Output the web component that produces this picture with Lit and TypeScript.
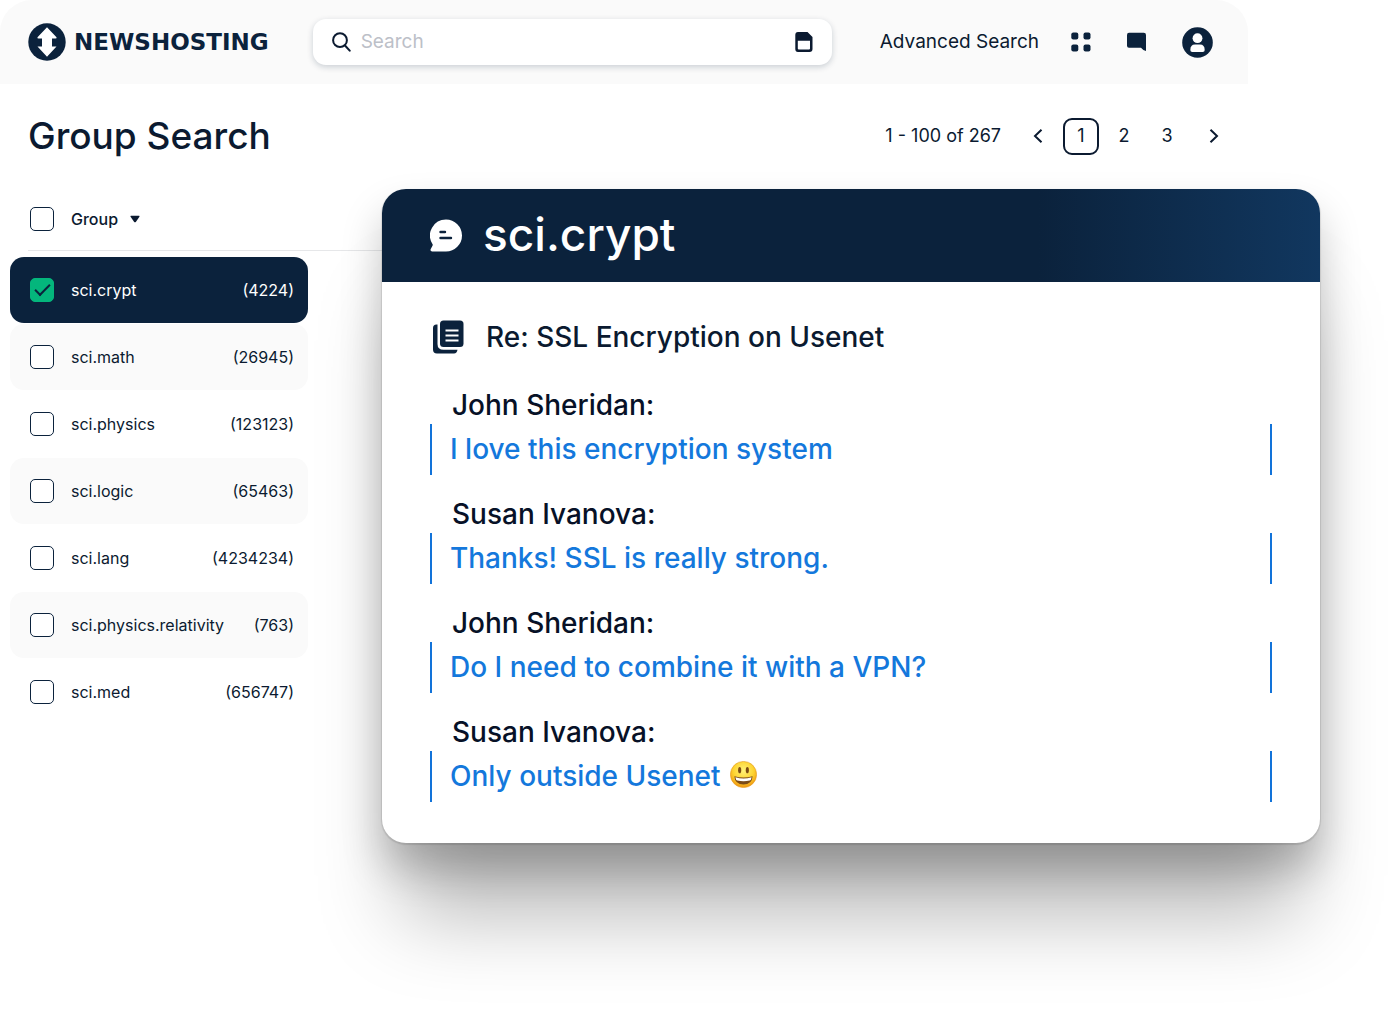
import { LitElement, html, css, svg } from "lit";
import { customElement, property, state } from "lit/decorators.js";
import { classMap } from "lit/directives/class-map.js";

interface Group {
  name: string;
  count: number;
}

interface Message {
  author: string;
  text: string;
  smile?: boolean;
}

const GROUPS: Group[] = [
  { name: "sci.crypt", count: 4224 },
  { name: "sci.math", count: 26945 },
  { name: "sci.physics", count: 123123 },
  { name: "sci.logic", count: 65463 },
  { name: "sci.lang", count: 4234234 },
  { name: "sci.physics.relativity", count: 763 },
  { name: "sci.med", count: 656747 },
];

const MESSAGES: Message[] = [
  { author: "John Sheridan", text: "I love this encryption system" },
  { author: "Susan Ivanova", text: "Thanks! SSL is really strong." },
  { author: "John Sheridan", text: "Do I need to combine it with a VPN?" },
  { author: "Susan Ivanova", text: "Only outside Usenet", smile: true },
];

const smile = svg`
  <defs>
    <radialGradient id="face" cx="50%" cy="35%" r="65%">
      <stop offset="0" stop-color="#fff27a" />
      <stop offset="0.6" stop-color="#fdd32f" />
      <stop offset="1" stop-color="#f0960f" />
    </radialGradient>
  </defs>
  <circle cx="13" cy="13" r="12.6" fill="url(#face)" stroke="#e39a1c" stroke-width="0.6" />
  <ellipse cx="9.3" cy="8.8" rx="1.5" ry="3" fill="#7b4a12" />
  <ellipse cx="16.7" cy="8.8" rx="1.5" ry="3" fill="#7b4a12" />
  <path d="M4.2 14.6Q13 17.4 21.8 14.6Q21.2 22.6 13 22.6Q4.8 22.6 4.2 14.6Z" fill="#7a4a16" />
  <path d="M5.2 15.6Q13 18 20.8 15.6Q20.4 18.4 19 18.8Q13 20 7 18.8Q5.6 18.4 5.2 15.6Z" fill="#fff" />`;

@customElement("group-list")
export class GroupList extends LitElement {
  @property({ attribute: false }) groups: Group[] = [];
  @state() private selected = new Set(["sci.crypt"]);

  static styles = css`
    :host {
      display: block;
      font-size: 16px;
    }
    .head {
      display: flex;
      align-items: center;
      gap: 17px;
      height: 62px;
      margin-left: 28px;
      padding-left: 2px;
      border-bottom: 1px solid #e6e7e9;
    }
    .sort {
      display: flex;
      align-items: center;
      gap: 12px;
      padding: 0;
      border: 0;
      background: none;
      color: inherit;
      font: inherit;
      font-weight: 500;
      cursor: pointer;
    }
    .rows {
      display: flex;
      flex-direction: column;
      gap: 1px;
      margin: 6px 74px 0 10px;
      padding: 0;
      list-style: none;
    }
    .row {
      display: flex;
      align-items: center;
      gap: 17px;
      height: 66px;
      padding: 0 14px 0 20px;
      border-radius: 14px;
      cursor: pointer;
    }
    .shaded {
      background: #fafafa;
    }
    .picked {
      background: #0b223c;
      color: #fff;
    }
    .name {
      flex: 1;
    }
    .box {
      appearance: none;
      flex: none;
      display: grid;
      place-content: center;
      width: 24px;
      height: 24px;
      margin: 0;
      border: 1px solid #0b223c;
      border-radius: 5px;
      background: #fff;
      cursor: pointer;
    }
    .box:checked {
      border-color: #04b67c;
      background: #04b67c;
    }
    .box:checked::before {
      content: "";
      width: 13px;
      height: 6px;
      margin-bottom: 4px;
      border: solid #0b223c;
      border-width: 0 0 2px 2px;
      transform: rotate(-45deg);
    }
  `;

  private toggle(name: string) {
    const next = new Set(this.selected);
    if (!next.delete(name)) next.add(name);
    this.selected = next;
  }

  render() {
    return html`
      <div class="head">
        <input class="box" type="checkbox" aria-label="Select all groups" />
        <button class="sort" type="button">
          Group
          <svg width="10" height="8" viewBox="0 0 10 8" aria-hidden="true">
            <path d="M1 .8h8q.9.1.4.9L5.800 6.900q-.8.8-1.600 0L.6 1.700Q.1.9 1 .8Z" fill="#0b1a30" />
          </svg>
        </button>
      </div>
      <ul class="rows">
        ${this.groups.map((g, i) => {
          const picked = this.selected.has(g.name);
          return html`<li>
            <label class=${classMap({ row: true, picked, shaded: !picked && i % 2 === 1 })}>
              <input class="box" type="checkbox" .checked=${picked} @change=${() => this.toggle(g.name)} />
              <span class="name">${g.name}</span>
              <span>(${g.count})</span>
            </label>
          </li>`;
        })}
      </ul>
    `;
  }
}

@customElement("thread-card")
export class ThreadCard extends LitElement {
  @property() group = "";
  @property() subject = "";
  @property({ attribute: false }) messages: Message[] = [];

  static styles = css`
    :host {
      display: block;
      border-radius: 24px;
      background: #fff;
      box-shadow:
        0 1px 1px 1px rgba(0, 0, 0, 0.1),
        0 24px 40px rgba(0, 0, 0, 0.22),
        0 92px 84px -20px rgba(0, 0, 0, 0.28);
    }
    .bar {
      display: flex;
      align-items: center;
      gap: 21px;
      height: 93px;
      padding: 0 48px;
      border-radius: 24px 24px 0 0;
      background: linear-gradient(90deg, #0b223c 70%, #11375f);
      color: #fff;
    }
    .group {
      margin: 0;
      font-size: 46px;
      font-weight: 500;
      line-height: 90px;
      height: 93px;
    }
    .body {
      padding: 38px 48px 41px;
      font-size: 28px;
      font-weight: 450;
      color: #071127;
    }
    .subject {
      display: flex;
      align-items: center;
      gap: 22px;
      margin: 0 0 32px 3px;
      font: inherit;
      line-height: 34px;
      color: #0b1a30;
    }
    .thread {
      display: flex;
      flex-direction: column;
      gap: 20px;
    }
    .author {
      margin: 0;
      padding-left: 22px;
      line-height: 38px;
    }
    .quote {
      display: flex;
      align-items: center;
      gap: 9px;
      margin: 0;
      padding: 0 18px;
      border: solid #1273d9;
      border-width: 0 2px;
      line-height: 51px;
      color: #1478dc;
    }
    .smile {
      margin-bottom: 4px;
    }
  `;

  render() {
    return html`
      <header class="bar">
        <svg width="32" height="33" viewBox="0 0 32 33" aria-hidden="true">
          <path d="M16 .5A16 16 0 0 1 16 32.500H2.200Q-.4 32 .9 29.800L2.600 26.600Q3 25.700 2.300 24.800A16 16 0 0 1 16 .5Z" fill="#fff" />
          <path d="M10.500 13h4.500M10.500 19h10.500" stroke="#0b223c" stroke-width="2.400" stroke-linecap="round" />
        </svg>
        <h2 class="group">${this.group}</h2>
      </header>
      <div class="body">
        <h3 class="subject">
          <svg width="31" height="34" viewBox="0 0 31 34" aria-hidden="true">
            <path d="M4.500 4.500H3.500Q0 4.500 0 8V29.500Q0 33.500 4 33.500H21Q24 33.500 24.500 29.800H10.500Q4.500 29.800 4.500 24Z" fill="#0b223c" />
            <rect x="7" y=".5" width="23.500" height="26.500" rx="3.500" fill="#0b223c" />
            <path d="M12.500 10.500h13M12.500 15.500h13M12.500 20.500h13" stroke="#fff" stroke-width="1.800" />
          </svg>
          ${this.subject}
        </h3>
        <div class="thread">
          ${this.messages.map(
            (m) => html`<article>
              <p class="author">${m.author}:</p>
              <blockquote class="quote">
                ${m.text}
                ${m.smile
                  ? html`<svg class="smile" width="27" height="27" viewBox="0 0 26 26" role="img" aria-label="Smile">${smile}</svg>`
                  : ""}
              </blockquote>
            </article>`,
          )}
        </div>
      </div>
    `;
  }
}

@customElement("app-root")
export class AppRoot extends LitElement {
  @state() private page = 1;

  static styles = css`
    :host {
      display: grid;
      grid-template-columns: minmax(0, 382fr) minmax(0, 866fr) minmax(0, 72fr) minmax(0, 80fr);
      min-height: 100vh;
      align-items: start;
      background: #fff;
      color: #0b1a30;
      font-family: Inter, "Liberation Sans", sans-serif;
      line-height: 24px;
    }
    .panel {
      grid-area: 1 / 1 / 2 / 3;
      display: grid;
      grid-template-columns: minmax(0, 382fr) minmax(0, 866fr);
    }
    .top {
      grid-column: 1 / -1;
      display: flex;
      align-items: center;
      height: 84px;
      padding: 0 35px 0 28px;
      border-radius: 32px 32px 0 0;
      background: #fafafa;
    }
    .logo {
      display: flex;
      align-items: center;
      gap: 8px;
      margin-right: 44px;
      color: #0b223c;
      font-family: "DejaVu Sans", sans-serif;
      font-size: 23px;
      font-weight: 700;
      text-decoration: none;
    }
    .search {
      flex: 1;
      display: flex;
      align-items: center;
      gap: 10px;
      height: 46px;
      padding: 0 19px;
      border-radius: 13px;
      background: #fff;
      box-shadow: 0 2px 6px rgba(11, 34, 60, 0.2);
    }
    .field {
      flex: 1;
      min-width: 0;
      padding: 0;
      border: 0;
      outline: 0;
      background: none;
      color: inherit;
      font: inherit;
      font-size: 19px;
    }
    .field::placeholder {
      color: #bcc0c8;
      opacity: 1;
    }
    .icon {
      display: grid;
      place-content: center;
      padding: 0;
      border: 0;
      background: none;
      cursor: pointer;
    }
    .advanced {
      margin: 0 32px 0 48px;
      color: inherit;
      font-size: 19px;
      text-decoration: none;
    }
    .tools {
      display: flex;
      align-items: center;
      gap: 35px;
    }
    .heading {
      grid-column: 1 / -1;
      display: flex;
      align-items: center;
      justify-content: space-between;
      height: 104px;
      padding: 0 12px 0 28px;
    }
    .title {
      margin: 0;
      font-size: 37px;
      font-weight: 500;
      line-height: 48px;
    }
    .pager {
      display: flex;
      align-items: center;
      gap: 7px;
      font-size: 18px;
    }
    .range {
      margin-right: 12px;
    }
    .page {
      display: grid;
      place-content: center;
      width: 36px;
      height: 37px;
      padding: 0;
      border: 2px solid transparent;
      border-radius: 9px;
      background: none;
      color: inherit;
      font: inherit;
      cursor: pointer;
    }
    .current {
      border-color: #0b1a30;
    }
    .next {
      width: 44px;
    }
    .thread {
      grid-area: 1 / 2 / 2 / 4;
      margin: 189px 0 183px;
    }
  `;

  render() {
    return html`
      <main class="panel">
        <header class="top">
          <a class="logo" href="#">
            <svg width="38" height="38" viewBox="0 0 38 38" aria-hidden="true">
              <circle cx="19" cy="19" r="18.700" fill="#0b223c" />
              <path d="M19 4.300L28.500 14.200Q29 15.500 27.500 15.500H24V23.500H28.500L19 33.800L9.500 23.500H14V15.500H10.500Q9 15.500 9.500 14.200Z" fill="#fff" />
            </svg>
            NEWSHOSTING
          </a>
          <div class="search">
            <svg width="19" height="20" viewBox="0 0 19 20" fill="none" stroke="#0b1a30" stroke-width="2" stroke-linecap="round" aria-hidden="true">
              <circle cx="8" cy="8.200" r="6.900" />
              <path d="M13 13.500L17.700 18.700" />
            </svg>
            <input class="field" type="search" placeholder="Search" aria-label="Search" />
            <button class="icon" type="button" aria-label="Save search">
              <svg width="18" height="20" viewBox="0 0 18 20" aria-hidden="true">
                <path fill-rule="evenodd" d="M3 0H12.500L17.500 5V17Q17.500 20 14.500 20H3Q.3 20 .3 17V3Q.3 0 3 0ZM2.800 8.700V16.500Q2.800 17.500 3.800 17.500H14Q15 17.500 15 16.500V8.700Z" fill="#0b1a30" />
              </svg>
            </button>
          </div>
          <a class="advanced" href="#">Advanced Search</a>
          <div class="tools">
            <button class="icon" type="button" aria-label="Apps">
              <svg width="20" height="20" viewBox="0 0 20 20" fill="#0b223c" aria-hidden="true">
                <rect x=".3" y=".5" width="7" height="7" rx="2" />
                <rect x="12.500" y=".5" width="7" height="7" rx="2" />
                <rect x=".3" y="12.500" width="7" height="7" rx="2" />
                <rect x="12.500" y="12.500" width="7" height="7" rx="2" />
              </svg>
            </button>
            <button class="icon" type="button" aria-label="Messages">
              <svg width="21" height="20" viewBox="0 0 21 20" aria-hidden="true">
                <path d="M3 .8H17.800Q20 .8 20 3V19Q17.500 19 15 15.800H3Q1 15.800 1 13.800V3Q1 .8 3 .8Z" fill="#0b223c" />
              </svg>
            </button>
            <button class="icon" type="button" aria-label="Account">
              <svg width="31" height="31" viewBox="0 0 31 31" aria-hidden="true">
                <circle cx="15.500" cy="15.500" r="15.300" fill="#0b223c" />
                <circle cx="15.500" cy="11.200" r="4.900" fill="#fff" />
                <path d="M8.300 23Q8.300 17.500 13 17.500H18Q22.700 17.500 22.700 23Q22.700 25 20.700 25H10.300Q8.300 25 8.300 23Z" fill="#fff" />
              </svg>
            </button>
          </div>
        </header>
        <section class="heading">
          <h1 class="title">Group Search</h1>
          <nav class="pager" aria-label="Pages">
            <span class="range">1 - 100 of 267</span>
            <button class="page" type="button" aria-label="Previous page">
              <svg width="10" height="14" viewBox="0 0 10 14" fill="none" stroke="#0b1a30" stroke-width="2" aria-hidden="true"><path d="M8.500 .8L2 7L8.500 13.200" /></svg>
            </button>
            ${[1, 2, 3].map(
              (n) => html`<button
                class=${classMap({ page: true, current: n === this.page })}
                type="button"
                @click=${() => (this.page = n)}
              >${n}</button>`,
            )}
            <button class="page next" type="button" aria-label="Next page">
              <svg width="10" height="14" viewBox="0 0 10 14" fill="none" stroke="#0b1a30" stroke-width="2" aria-hidden="true"><path d="M1.500 .8L8 7L1.500 13.200" /></svg>
            </button>
          </nav>
        </section>
        <group-list .groups=${GROUPS}></group-list>
      </main>
      <thread-card
        class="thread"
        group="sci.crypt"
        subject="Re: SSL Encryption on Usenet"
        .messages=${MESSAGES}
      ></thread-card>
    `;
  }
}
